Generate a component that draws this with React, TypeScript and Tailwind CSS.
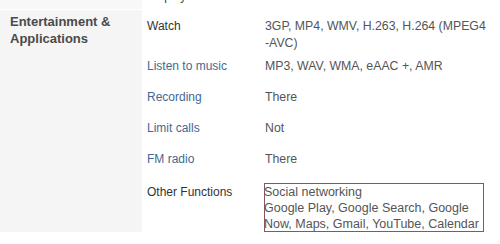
const rows = [
  { label: "Listen to music", value: "MP3, WAV, WMA, eAAC +, AMR" },
  { label: "Recording", value: "There" },
  { label: "Limit calls", value: "Not" },
  { label: "FM radio", value: "There" },
];

export default function App() {
  return (
    <div className="w-[500px] h-[244px] overflow-hidden bg-white text-[12px] font-['Liberation_Sans',Arial,sans-serif]">
      {/* tail of the previous section */}
      <div className="flex h-[9px]">
        <div className="w-[142px] bg-[#f8f8f8]" />
        <div className="flex-1 relative overflow-hidden">
          <span className="absolute left-[5px] -top-[12px] leading-[17px] text-[#444]">Display</span>
        </div>
      </div>

      <div className="flex h-[223px] border-t border-white">
        <div className="w-[142px] shrink-0 bg-[#f5f5f5] pl-[10px] pt-[3px]">
          <h3 className="text-[13px] leading-[17px] font-bold text-[#4a4a4a]">
            Entertainment &amp;
            <br />
            Applications
          </h3>
        </div>

        <div className="flex-1 pl-[5px]">
          <div className="flex h-[42px] pt-[8px]">
            <div className="w-[118px] leading-[17px] text-[#333]">Watch</div>
            <div className="text-[12.3px] leading-[17px] text-[#555]">
              3GP, MP4, WMV, H.263, H.264 (MPEG4
              <br />
              -AVC)
            </div>
          </div>

          {rows.map((r) => (
            <div key={r.label} className="flex h-[31px] pt-[6px]">
              <div className="w-[118px] leading-[17px] text-[#44698f]">{r.label}</div>
              <div className="text-[12.3px] leading-[17px] text-[#555]">{r.value}</div>
            </div>
          ))}

          <div className="flex pt-[8px]">
            <div className="w-[117px] leading-[17px] text-[#333]">Other Functions</div>
            <div className="-mt-[1px] w-[220px] h-[49px] border border-[#8b5656] text-[12.5px] leading-[16px] text-[#555] whitespace-nowrap">
              <p className="-ml-[1px]">Social networking</p>
              <p className="-ml-[1px]">Google Play, Google Search, Google</p>
              <p className="-ml-[1px]">Now, Maps, Gmail, YouTube, Calendar</p>
            </div>
          </div>
        </div>
      </div>
    </div>
  );
}
